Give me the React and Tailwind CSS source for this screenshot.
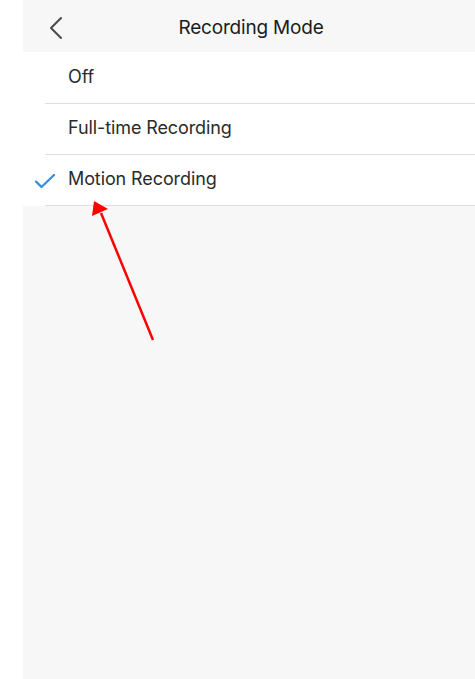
import React from "react";

const rows = [
  { label: "Off", h: "h-[51px]", checked: false },
  { label: "Full-time Recording", h: "h-[50px]", checked: false },
  { label: "Motion Recording", h: "h-[50px]", checked: true },
];

export default function App() {
  return (
    <div
      className="relative flex w-[475px] h-[679px] bg-white overflow-hidden"
      style={{ fontFamily: "Inter, 'Noto Sans', sans-serif" }}
    >
      <div className="w-[23px] shrink-0 bg-white" />
      <div className="flex-1 flex flex-col bg-[#f7f7f7]">
        <div className="relative h-[52px] flex items-center justify-center">
          <svg
            className="absolute left-[26px] top-[16px]"
            width="14"
            height="24"
            viewBox="0 0 14 24"
            fill="none"
          >
            <path
              d="M12 2 L2 12 L12 22"
              stroke="#4a4a4a"
              strokeWidth="2"
              strokeLinecap="round"
              strokeLinejoin="round"
            />
          </svg>
          <span className="text-[19px] text-[#1c1c1c] tracking-[-0.2px] ml-[4px] mt-[4px]">
            Recording Mode
          </span>
        </div>
        <div className="bg-white">
          {rows.map((r) => (
            <div key={r.label}>
              <div className={`relative ${r.h} flex items-center pl-[45px]`}>
                {r.checked && (
                  <svg
                    className="absolute left-[11px] top-[18px]"
                    width="22"
                    height="16"
                    viewBox="0 0 22 16"
                    fill="none"
                  >
                    <path
                      d="M2 8.5 L7.5 14 L20 2"
                      stroke="#3d8fdc"
                      strokeWidth="2.4"
                      strokeLinecap="round"
                      strokeLinejoin="round"
                    />
                  </svg>
                )}
                <span className="text-[18px] text-[#2b2b2b] tracking-[-0.1px] mb-[3px]">
                  {r.label}
                </span>
              </div>
              <div className="ml-[22px] h-px bg-[#dedede]" />
            </div>
          ))}
        </div>
      </div>
      <svg
        className="absolute left-0 top-0 pointer-events-none"
        width="475"
        height="679"
        viewBox="0 0 475 679"
      >
        <line x1="153" y1="340" x2="101" y2="213" stroke="#ff0000" strokeWidth="2.5" />
        <polygon points="94,201 92,216 108,209" fill="#ff0000" />
      </svg>
    </div>
  );
}
